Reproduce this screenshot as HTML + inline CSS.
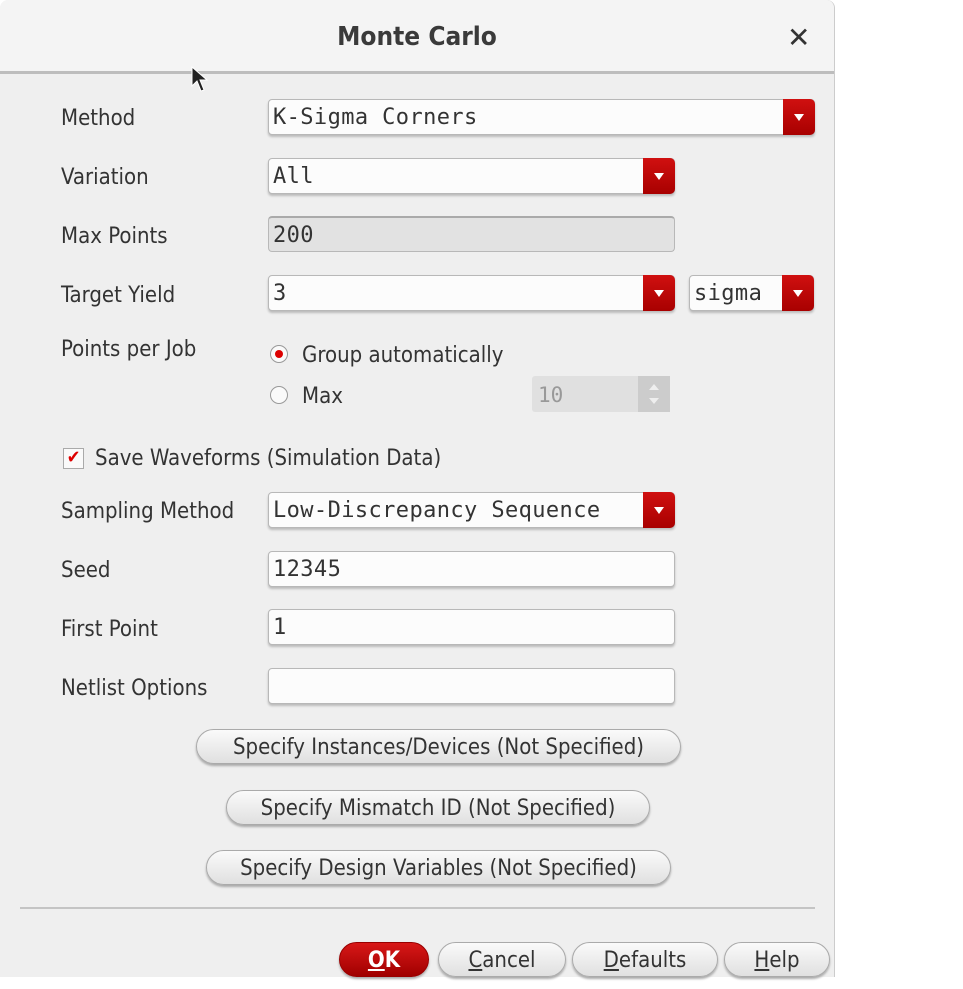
<!DOCTYPE html>
<html><head><style>
body{margin:0;width:963px;height:989px;background:#fff;position:relative;overflow:hidden;font-family:"DejaVu Sans Condensed","DejaVu Sans","Liberation Sans",sans-serif;color:#333}
.dlg{position:absolute;left:0;top:0;width:834px;height:977px;background:#efefef;border-right:1px solid #ccc;border-radius:8px 8px 0 0}
.title{position:absolute;left:0;top:0;width:834px;height:71px;background:#f4f4f4;border-bottom:3px solid #bdbdbd;border-radius:8px 8px 0 0}
.title span{position:absolute;left:0;width:834px;top:22px;text-align:center;font-size:26px;font-weight:bold;color:#3a3a3a}
.x{position:absolute;left:787px;top:21px;font-size:28px;font-weight:bold;color:#333;font-family:"DejaVu Sans",sans-serif}
.lbl{position:absolute;left:61px;font-size:22px;color:#333;white-space:nowrap}
.fld{position:absolute;left:268px;background:#fcfcfc;border:1px solid #b8b8b8;border-radius:4px;box-shadow:0 2px 2px #bbb;font-family:"DejaVu Sans Mono","Liberation Mono",monospace;font-size:22px;letter-spacing:0.4px;line-height:36px;padding-left:4px;box-sizing:border-box;height:36px;white-space:nowrap}
.dd{position:absolute;right:-1px;top:-1px;width:32px;height:36px;background:linear-gradient(#d01010,#a80000);border-radius:0 5px 5px 0}
.dd:after{content:"";position:absolute;left:11px;top:15px;border-left:5px solid transparent;border-right:5px solid transparent;border-top:7px solid #fff}
.btn{position:absolute;height:35px;border:1px solid #aaa;border-radius:18px;background:linear-gradient(#fafafa,#e0e0e0);box-shadow:0 2px 2px #aaa;text-align:center;font-size:22px;line-height:35px;color:#333;box-sizing:border-box;white-space:nowrap}
u{text-decoration:underline}
</style></head><body>
<div class="dlg">
<div class="title"><span>Monte Carlo</span><div class="x">✕</div></div>
<div class="lbl" style="top:106px">Method</div>
<div class="fld" style="top:99px;width:547px">K-Sigma Corners<div class="dd"></div></div>
<div class="lbl" style="top:165px">Variation</div>
<div class="fld" style="top:158px;width:407px">All<div class="dd"></div></div>
<div class="lbl" style="top:224px">Max Points</div>
<div class="fld" style="top:216px;width:407px;background:#e2e2e2;box-shadow:none;border-top:2px solid #aaa">200</div>
<div class="lbl" style="top:283px">Target Yield</div>
<div class="fld" style="top:275px;width:407px">3<div class="dd"></div></div>
<div class="fld" style="top:275px;left:689px;width:125px">sigma<div class="dd"></div></div>
<div class="lbl" style="top:337px">Points per Job</div>
<div style="position:absolute;left:270px;top:345px;width:16px;height:16px;border-radius:50%;border:1px solid #999;background:#fafafa"><div style="position:absolute;left:4px;top:4px;width:8px;height:8px;border-radius:50%;background:#d00"></div></div>
<div class="lbl" style="left:302px;top:343px">Group automatically</div>
<div style="position:absolute;left:270px;top:386px;width:16px;height:16px;border-radius:50%;border:1px solid #999;background:#fafafa"></div>
<div class="lbl" style="left:302px;top:384px">Max</div>
<div style="position:absolute;left:532px;top:376px;width:138px;height:36px;background:#e0e0e0;border-radius:3px;font-family:'DejaVu Sans Mono',monospace;font-size:21px;line-height:38px;padding-left:6px;box-sizing:border-box;color:#999">10<div style="position:absolute;right:0;top:0;width:32px;height:36px;background:#ccc"><div style="position:absolute;left:11px;top:8px;border-left:5px solid transparent;border-right:5px solid transparent;border-bottom:6px solid #eee"></div><div style="position:absolute;left:11px;top:22px;border-left:5px solid transparent;border-right:5px solid transparent;border-top:6px solid #eee"></div></div></div>
<div style="position:absolute;left:63px;top:448px;width:19px;height:19px;border:1px solid #aaa;background:#fafafa;color:#d00;font-size:18px;line-height:18px;text-align:center;font-weight:bold">✔</div>
<div class="lbl" style="left:95px;top:446px">Save Waveforms (Simulation Data)</div>
<div class="lbl" style="top:499px">Sampling Method</div>
<div class="fld" style="top:492px;width:407px">Low-Discrepancy Sequence<div class="dd"></div></div>
<div class="lbl" style="top:558px">Seed</div>
<div class="fld" style="top:551px;width:407px">12345</div>
<div class="lbl" style="top:617px">First Point</div>
<div class="fld" style="top:609px;width:407px">1</div>
<div class="lbl" style="top:676px">Netlist Options</div>
<div class="fld" style="top:668px;width:407px"></div>
<div class="btn" style="left:196px;top:729px;width:485px">Specify Instances/Devices (Not Specified)</div>
<div class="btn" style="left:226px;top:790px;width:424px">Specify Mismatch ID (Not Specified)</div>
<div class="btn" style="left:206px;top:850px;width:465px">Specify Design Variables (Not Specified)</div>
<div style="position:absolute;left:20px;top:907px;width:795px;height:2px;background:#c4c4c4"></div>
<div class="btn" style="left:339px;top:942px;width:90px;background:linear-gradient(#d81818,#a00000);color:#fff;font-weight:bold;border-color:#900"><u>O</u>K</div>
<div class="btn" style="left:438px;top:942px;width:128px"><u>C</u>ancel</div>
<div class="btn" style="left:572px;top:942px;width:146px"><u>D</u>efaults</div>
<div class="btn" style="left:724px;top:942px;width:106px"><u>H</u>elp</div>
</div>
<svg style="position:absolute;left:191px;top:66px" width="18" height="28" viewBox="0 0 18 28"><path d="M1 1 L1 20 L6 15 L10 25 L13 24 L9 14 L16 14 Z" fill="#222" stroke="#fff" stroke-width="1"/></svg>
</body></html>
